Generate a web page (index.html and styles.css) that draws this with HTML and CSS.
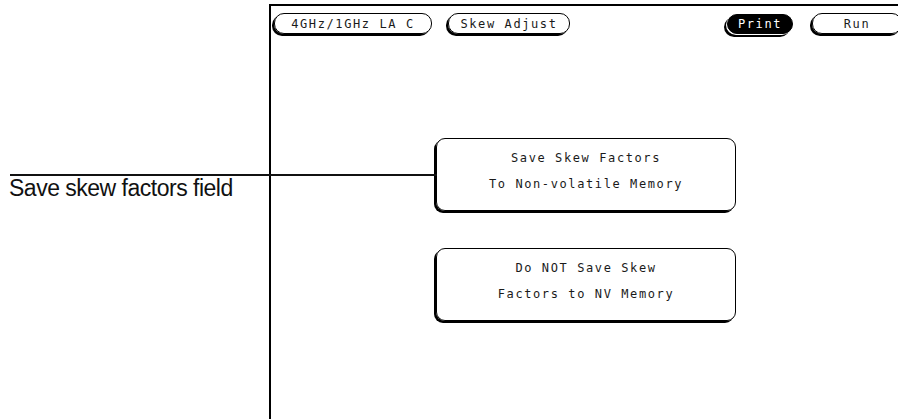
FILE: index.html
```html
<!DOCTYPE html>
<html>
<head>
<meta charset="utf-8">
<link rel="stylesheet" href="styles.css">
</head>
<body>
<div class="page">
  <div class="annot">
    <div class="leader"></div>
    <div class="annot-label">Save skew factors field</div>
  </div>
  <div class="screen">
    <div class="toolbar">
      <div class="btn btn-mod">4GHz/1GHz LA C</div>
      <div class="btn btn-menu">Skew Adjust</div>
      <div class="btn btn-print">Print</div>
      <div class="btn btn-run">Run</div>
    </div>
    <div class="fields">
      <div class="field">Save Skew Factors<br>To Non-volatile Memory</div>
      <div class="field">Do NOT Save Skew<br>Factors to NV Memory</div>
    </div>
  </div>
</div>
</body>
</html>
```

FILE: styles.css
```css
html, body {
  margin: 0;
  padding: 0;
  background: #fff;
  width: 898px;
  height: 419px;
  overflow: hidden;
}

.page {
  position: relative;
  display: flex;
  height: 419px;
}

.annot {
  position: absolute;
  left: 10px;
  top: 174px;
  width: 427px;
  z-index: 2;
}

.leader {
  height: 0;
  border-top: 2px solid #111;
}

.annot-label {
  margin-left: -1px;
  margin-top: 1px;
  font-family: "Liberation Sans", Arial, sans-serif;
  font-size: 23px;
  line-height: 22px;
  letter-spacing: -0.5px;
  color: #111;
}

.screen {
  flex: 1;
  min-width: 0;
  margin-left: 269px;
  margin-top: 4px;
  border-top: 2px solid #000;
  border-left: 2px solid #000;
}

.toolbar {
  display: flex;
  align-items: flex-start;
  padding: 7px 0 0 3px;
}

.btn,
.field {
  font-family: "DejaVu Sans Mono", "Liberation Mono", monospace;
  font-size: 12px;
  letter-spacing: 1.6px;
  color: #1a1a1a;
}

.btn {
  box-sizing: border-box;
  flex: none;
  height: 21px;
  border: 1px solid #000;
  border-radius: 10px;
  box-shadow: -2px 2px 0 #000;
  display: flex;
  align-items: center;
  justify-content: center;
  white-space: nowrap;
}

.btn-mod {
  width: 158px;
}

.btn-menu {
  width: 122px;
  margin-left: 16px;
}

.btn-print {
  width: 66px;
  height: 20px;
  margin-top: 1px;
  margin-left: 157px;
  background: #000;
  color: #fff;
  box-shadow: -1px 1px 0 #fff, -3px 3px 0 #000;
}

.btn-run {
  width: 90px;
  margin-left: 19px;
}

.fields {
  display: flex;
  flex-direction: column;
  gap: 37px;
  padding: 104px 0 0 165px;
}

.field {
  box-sizing: border-box;
  width: 300px;
  height: 73px;
  border: 1px solid #000;
  border-radius: 9px;
  box-shadow: -2px 2px 0 #000;
  text-align: center;
  line-height: 26px;
  padding-top: 6px;
}
```
